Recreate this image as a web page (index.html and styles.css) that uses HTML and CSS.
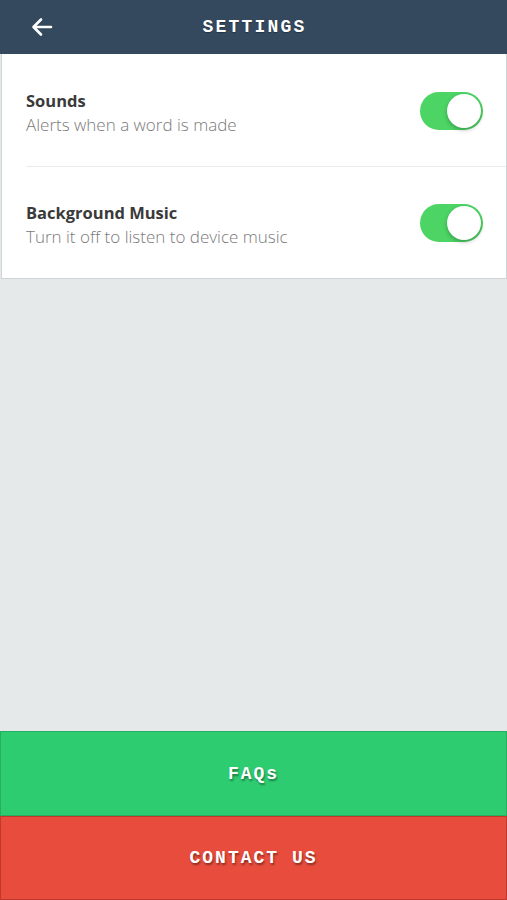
FILE: index.html
```html
<!DOCTYPE html>
<html lang="en">
<head>
  <meta charset="UTF-8">
  <meta name="viewport" content="width=device-width, initial-scale=1.0">
  <title>Settings</title>
  <link rel="stylesheet" href="styles.css">
</head>
<body>
  <!-- Top bar -->
  <header class="topbar">
    <button class="back-btn" aria-label="Back">
      <svg width="22" height="20" viewBox="0 0 22 20">
        <path d="M20 10H3M10 2.5L2.5 10l7.5 7.5" fill="none" stroke="#fff" stroke-width="2.6" stroke-linecap="round" stroke-linejoin="round"/>
      </svg>
    </button>
    <h1 class="title">SETTINGS</h1>
  </header>

  <!-- Options -->
  <section class="card">
    <div class="row">
      <div class="row-text">
        <div class="row-title">Sounds</div>
        <div class="row-sub">Alerts when a word is made</div>
      </div>
      <span class="switch"><span class="knob"></span></span>
    </div>
    <div class="row">
      <div class="row-text">
        <div class="row-title">Background Music</div>
        <div class="row-sub">Turn it off to listen to device music</div>
      </div>
      <span class="switch"><span class="knob"></span></span>
    </div>
  </section>

  <div class="spacer"></div>

  <!-- Bottom actions -->
  <button class="action faq">FAQs</button>
  <button class="action contact">CONTACT US</button>
</body>
</html>
```

FILE: styles.css
```css
html, body {
  height: 100%;
}

body {
  margin: 0;
  display: flex;
  flex-direction: column;
  background-color: #e5e9ea;
  font-family: "Open Sans", Arial, sans-serif;
}

.topbar {
  height: 54px;
  flex-shrink: 0;
  background-color: #34495e;
  display: flex;
  align-items: center;
  justify-content: center;
  position: relative;
}

.back-btn {
  position: absolute;
  left: 31px;
  top: 17px;
  padding: 0;
  border: none;
  background: none;
  display: flex;
}

.title {
  margin: 0;
  color: #fff;
  font-family: "Liberation Mono", "Courier New", monospace;
  font-weight: bold;
  font-size: 18px;
  letter-spacing: 2.2px;
  padding-left: 2px;
  text-shadow: 0 1px 1px rgba(0, 0, 0, 0.3);
}

.card {
  background-color: #fff;
  border: 1px solid #cfd4d6;
  border-top: none;
  margin: 0 0 0 1px;
  flex-shrink: 0;
}

.row {
  height: 112px;
  margin-left: 24px;
  padding-right: 23px;
  display: flex;
  align-items: center;
  justify-content: space-between;
}

.row + .row {
  border-top: 1px solid #e8eaeb;
  height: 111px;
}

.row-text {
  padding-top: 5px;
}

.row-title {
  font-weight: bold;
  font-size: 16.5px;
  color: #3a3a3a;
  line-height: 23px;
}

.row-sub {
  font-weight: 300;
  font-size: 17px;
  color: #7a7a7a;
  line-height: 25px;
}

.switch {
  width: 63px;
  height: 38px;
  border-radius: 19px;
  background-color: #4cd464;
  position: relative;
  flex-shrink: 0;
  margin-top: 1px;
}

.knob {
  position: absolute;
  right: 2px;
  top: 2px;
  width: 34px;
  height: 34px;
  border-radius: 50%;
  background-color: #fff;
  box-shadow: 0 2px 4px rgba(0, 0, 0, 0.25);
}

.spacer {
  flex: 1;
}

.action {
  height: 85px;
  flex-shrink: 0;
  width: 100%;
  margin: 0;
  border: 1px solid;
  color: #fff;
  font-family: "Liberation Mono", "Courier New", monospace;
  font-weight: bold;
  font-size: 18px;
  letter-spacing: 2px;
  text-shadow: 1px 2px 2px rgba(0, 0, 0, 0.4);
}

.faq {
  background-color: #2ecc71;
  border-color: #27ae60;
}

.contact {
  height: 84px;
  background-color: #e74c3c;
  border-color: #c0392b;
}
```
